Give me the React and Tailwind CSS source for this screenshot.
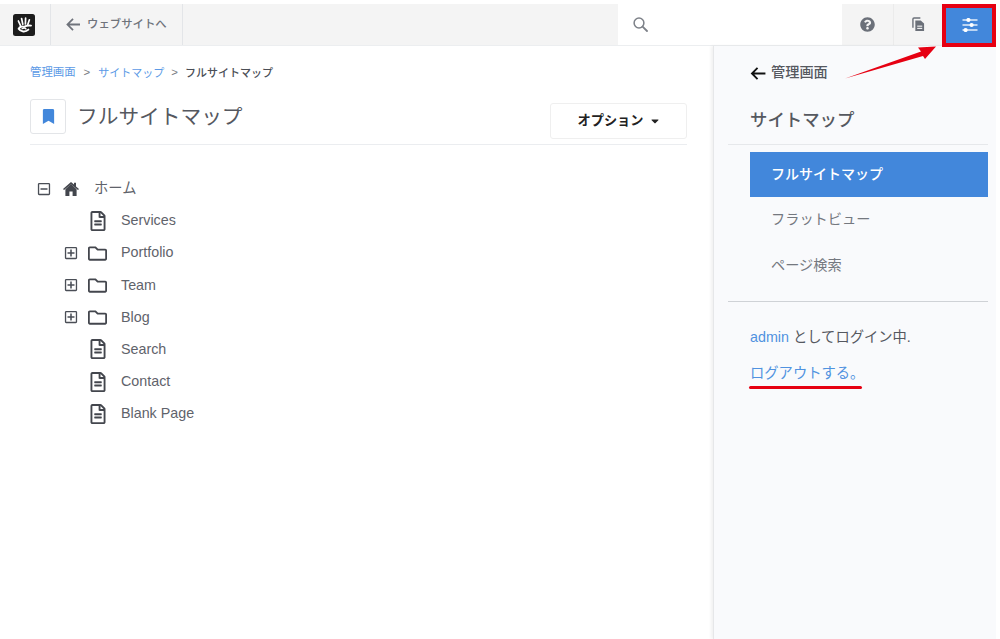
import React from "react";
import { FaQuestionCircle, FaBookmark, FaRegFileAlt, FaRegFolder, FaRegPlusSquare, FaRegMinusSquare, FaCaretDown } from "react-icons/fa";

const Logo = () => (
  <svg viewBox="0 0 22 22" className="w-[22px] h-[22px]">
    <rect x="0" y="0" width="22" height="22" rx="2.5" fill="#1c1c1c" />
    <g stroke="#fff" strokeLinecap="round" fill="none">
      <path d="M5.4 7 L7.4 11.4" strokeWidth="1.7" />
      <path d="M8.6 4.6 L9.8 10.2" strokeWidth="1.7" />
      <path d="M12.6 4.2 L12.4 10" strokeWidth="1.7" />
      <path d="M16.4 5.8 L14.8 10.6" strokeWidth="1.7" />
      <path d="M18 11.6 C15.4 11.2 13 11.8 11 12.8 C9 11.8 6.5 13 5.6 14.8 C7.6 18 12.6 18.4 15.4 15.6" strokeWidth="1.9" />
      <path d="M9 14.8 C10.6 13.8 12.2 14 13 15" strokeWidth="1.3" />
    </g>
  </svg>
);

const Copy = () => (
  <svg viewBox="0 0 14 16" className="w-[13px] h-[15px]">
    <path d="M1 11.5 V2.2 C1 1.5 1.5 1 2.2 1 H9" fill="none" stroke="#6b7079" strokeWidth="1.5" />
    <path d="M3.6 3.6 H9.4 L13 7 V15 H3.6 Z" fill="#6b7079" />
    <rect x="5.6" y="9.2" width="5.4" height="1.2" fill="#f4f4f4" />
    <rect x="5.6" y="11.6" width="5.4" height="1.2" fill="#f4f4f4" />
  </svg>
);

const Sliders = () => (
  <svg viewBox="0 0 16 14" className="w-[16px] h-[14px]" fill="none">
    <path d="M0.5 2 H15.5 M0.5 7 H15.5 M0.5 12 H15.5" stroke="#e4eefa" strokeWidth="1.4" />
    <circle cx="6.4" cy="2" r="2.1" fill="#fff" />
    <circle cx="9.6" cy="7" r="2.1" fill="#fff" />
    <circle cx="3.6" cy="12" r="2.1" fill="#fff" />
  </svg>
);

const Home = () => (
  <svg viewBox="0 0 16 14" className="w-[16px] h-[14px]" fill="#43464d">
    <path d="M8 0 L11 2.6 V0.8 H13 V4.4 L16 7 L15 8 L8 2.2 L1 8 L0 7 Z" />
    <path d="M2.4 7.2 L8 2 L13.6 7.2 V14 H9.6 V9.6 H6.4 V14 H2.4 Z" />
  </svg>
);

function Row({ indent, toggle, icon, label, first }) {
  return (
    <div className={first ? "flex items-center h-[33px]" : "flex items-center h-[32.1px]"}>
      <div className={indent ? "w-[34px] shrink-0" : "w-[7px] shrink-0"} />
      <div className={indent ? "w-[24px] shrink-0 flex" : "w-[26px] shrink-0 flex"}>
        {toggle === "plus" && <FaRegPlusSquare className="text-[14px] text-[#4a4e56]" />}
        {toggle === "minus" && <FaRegMinusSquare className="text-[14px] text-[#4a4e56]" />}
      </div>
      {icon}
      <span className="text-[14.3px] text-[#5f636b]">{label}</span>
    </div>
  );
}

const FileIco = (
  <div className="w-[33px] flex shrink-0"><FaRegFileAlt className="text-[20px] text-[#43464d]" /></div>
);
const FolderIco = (
  <div className="w-[33px] flex shrink-0"><FaRegFolder className="text-[19px] text-[#43464d]" /></div>
);

export default function App() {
  return (
    <div className="relative w-[1000px] h-[639px] bg-white overflow-hidden text-[#4a4e56]" style={{ fontFamily: '"Liberation Sans", "Noto Sans CJK JP", sans-serif' }}>
      <div className="pt-[4px] pr-[4px] h-full flex flex-col">
        {/* header */}
        <header className="h-[42px] shrink-0 flex bg-[#f4f4f4] border-b border-[#eceef0]">
          <div className="w-[51px] flex items-center pl-[13px] border-r border-[#e3e5e8]"><Logo /></div>
          <div className="w-[132px] flex items-center pl-[15px] gap-[6px] border-r border-[#e3e5e8] text-[#6f737b]">
            <svg viewBox="0 0 16 14" className="w-[15px] h-[13px]" fill="none" stroke="#6f737b" strokeWidth="1.9"><path d="M15 7 H2 M7.5 1 L1.5 7 L7.5 13" /></svg>
            <span className="text-[11.4px] font-medium">ウェブサイトへ</span>
          </div>
          <div className="w-[435px]" />
          <div className="w-[224px] bg-white flex items-center pl-[15px]">
            <svg viewBox="0 0 15 15" className="w-[15px] h-[15px]" fill="none" stroke="#7d8188" strokeWidth="1.5"><circle cx="6" cy="6" r="4.9" /><path d="M9.6 9.6 L14 14" strokeLinecap="round" strokeWidth="1.8" /></svg>
          </div>
          <div className="w-[52px] flex items-center justify-center border-r border-[#ebebeb]"><FaQuestionCircle className="text-[15px] text-[#6b7079]" /></div>
          <div className="w-[49px] flex items-center justify-center"><Copy /></div>
          <div className="flex-1 bg-[#4287db] flex items-center justify-center"><Sliders /></div>
        </header>

        <div className="flex flex-1 min-h-0">
          {/* main */}
          <main className="w-[713px] shrink-0 pl-[30px] pr-[26px] pt-[19px]">
            <nav className="h-[16px] flex items-center text-[11.4px]">
              <span className="text-[#5c9ae6]">管理画面</span>
              <span className="ml-[8px] mr-[8px] text-[#777b82]">&gt;</span>
              <span className="text-[11px] text-[#5c9ae6]">サイトマップ</span>
              <span className="mx-[7px] text-[#777b82]">&gt;</span>
              <span className="text-[11px] font-medium text-[#4a4e56]">フルサイトマップ</span>
            </nav>
            <div className="mt-[18px] h-[46px] flex items-start border-b border-[#ebedf0]">
              <div className="w-[36px] h-[35px] border border-[#e3e5e8] rounded-[3px] flex items-center justify-center">
                <FaBookmark className="text-[15px] text-[#4287db]" />
              </div>
              <h1 className="ml-[11px] text-[20.7px] leading-[36px] text-[#55585f]">フルサイトマップ</h1>
              <button className="ml-auto mt-[4px] w-[137px] h-[36px] bg-white border border-[#efefef] rounded-[3px] flex items-center justify-center gap-[6px] pl-[2px] text-[13.2px] font-bold text-[#222]">
                オプション<FaCaretDown className="text-[12px]" />
              </button>
            </div>
            <div className="mt-[27px]">
              <Row first toggle="minus" icon={<div className="w-[31px] flex shrink-0"><Home /></div>} label="ホーム" />
              <Row indent icon={FileIco} label="Services" />
              <Row indent toggle="plus" icon={FolderIco} label="Portfolio" />
              <Row indent toggle="plus" icon={FolderIco} label="Team" />
              <Row indent toggle="plus" icon={FolderIco} label="Blog" />
              <Row indent icon={FileIco} label="Search" />
              <Row indent icon={FileIco} label="Contact" />
              <Row indent icon={FileIco} label="Blank Page" />
            </div>
          </main>

          {/* sidebar */}
          <aside className="flex-1 bg-[#f9fafc] border-l border-[#e6e7e9] shadow-[-2px_0_3px_rgba(0,0,0,0.06)] pl-[14px] pr-[8px]">
            <div className="h-[99px] pl-[22px] border-b border-[#e6e8eb]">
              <div className="pt-[16px] flex items-center gap-[5px] h-[38px]">
                <svg viewBox="0 0 16 14" className="w-[16px] h-[13px]" fill="none" stroke="#111" strokeWidth="2"><path d="M16 7 H2 M7.5 1 L1.5 7 L7.5 13" /></svg>
                <span className="text-[14.2px] font-medium text-[#55585f]">管理画面</span>
              </div>
              <h2 className="mt-[24px] text-[17.4px] leading-[24px] font-medium text-[#55585f]">サイトマップ</h2>
            </div>
            <div className="pl-[22px] pt-[7px] pb-[13px] border-b border-[#cfd2d6]">
              <div className="h-[45px] bg-[#4287db] pl-[21px] flex items-center text-[14px] font-medium text-white">フルサイトマップ</div>
              <div className="h-[46px] pl-[21px] flex items-center text-[14.2px] text-[#74787f]">フラットビュー</div>
              <div className="h-[45px] pl-[21px] flex items-center text-[14.2px] text-[#74787f]">ページ検索</div>
            </div>
            <div className="pl-[22px] pt-[25px] text-[14.3px] text-[#55585f]">
              <p className="h-[20px] leading-[20px]"><span className="text-[#5092e0]">admin</span> としてログイン中.</p>
              <p className="mt-[16px] h-[20px] leading-[20px] text-[#5092e0]">ログアウトする。</p>
            </div>
          </aside>
        </div>
      </div>

      {/* annotations */}
      <div className="absolute left-[942px] top-[4px] w-[54px] h-[43px] border-[4px] border-[#e60012]" />
      <div className="absolute left-[749px] top-[386px] w-[113px] h-[3px] rounded-full bg-[#e60012]" />
      <svg className="absolute left-[840px] top-[40px] w-[105px] h-[45px]" viewBox="0 0 105 45">
        <path d="M5 38.5 L81 11.5 L78 7.5 L96 6.5 L85 19 L83 16 Z" fill="#e60012" />
      </svg>
    </div>
  );
}
